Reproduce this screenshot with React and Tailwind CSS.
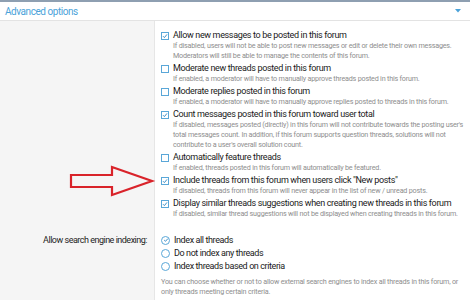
import React from "react";

const font = { fontFamily: 'Roboto, "Liberation Sans", Arial, sans-serif' };

function Check({ checked }) {
  return (
    <span className="mt-[2px] flex h-[8px] w-[8px] shrink-0 items-center justify-center border border-[#5aa7d8] bg-white">
      {checked && (
        <svg width="6" height="6" viewBox="0 0 6 6">
          <path d="M1 3.2 L2.4 4.6 L5 1.4" fill="none" stroke="#3d8fc8" strokeWidth="1" />
        </svg>
      )}
    </span>
  );
}

function Radio({ checked }) {
  return (
    <span className="flex h-[9px] w-[9px] shrink-0 items-center justify-center rounded-full border border-[#5aa7d8] bg-white">
      {checked && (
        <svg width="6" height="6" viewBox="0 0 6 6">
          <path d="M1.2 3.1 L2.5 4.3 L4.9 1.6" fill="none" stroke="#3d8fc8" strokeWidth="1" />
        </svg>
      )}
    </span>
  );
}

const items = [
  {
    checked: true,
    label: "Allow new messages to be posted in this forum",
    desc: [
      "If disabled, users will not be able to post new messages or edit or delete their own messages.",
      "Moderators will still be able to manage the contents of this forum.",
    ],
  },
  {
    checked: false,
    label: "Moderate new threads posted in this forum",
    desc: ["If enabled, a moderator will have to manually approve threads posted in this forum."],
  },
  {
    checked: false,
    label: "Moderate replies posted in this forum",
    desc: ["If enabled, a moderator will have to manually approve replies posted to threads in this forum."],
  },
  {
    checked: true,
    label: "Count messages posted in this forum toward user total",
    desc: [
      "If disabled, messages posted (directly) in this forum will not contribute towards the posting user's",
      "total messages count. In addition, if this forum supports question threads, solutions will not",
      "contribute to a user's overall solution count.",
    ],
  },
  {
    checked: false,
    label: "Automatically feature threads",
    desc: ["If enabled, threads posted in this forum will automatically be featured."],
  },
  {
    checked: true,
    label: 'Include threads from this forum when users click "New posts"',
    desc: ["If disabled, threads from this forum will never appear in the list of new / unread posts."],
  },
  {
    checked: true,
    label: "Display similar threads suggestions when creating new threads in this forum",
    desc: ["If disabled, similar thread suggestions will not be displayed when creating threads in this forum."],
  },
];

export default function App() {
  return (
    <div className="relative h-[300px] w-[470px] overflow-hidden bg-white" style={font}>
      <div className="h-[2px] bg-[#8e9fb1]" />
      <div className="flex h-[19px] items-center justify-between border-b border-[#e3e3e3] bg-white pl-[5px] pr-[9px]">
        <span className="text-[10px] tracking-[-0.45px] text-[#4aa2d9]">Advanced options</span>
        <svg width="6" height="4" viewBox="0 0 6 4">
          <path d="M0 0 L6 0 L3 3.5 Z" fill="#4aa2d9" />
        </svg>
      </div>
      <div className="flex h-[279px] flex-col">
        <div className="flex">
          <div className="w-[155px] shrink-0 border-r border-[#e6e6e6] bg-[#f5f5f5]" />
          <div className="flex-1 pb-[15px] pl-[6px] pt-[9px]">
            <div className="flex flex-col gap-[2px]">
              {items.map((it, i) => (
                <div key={i} className="flex gap-[4px]">
                  <Check checked={it.checked} />
                  <div>
                    <div className="whitespace-nowrap text-[9px] leading-[11px] tracking-[-0.35px] text-[#1a1a1a]">
                      {it.label}
                    </div>
                    {it.desc.map((d, j) => (
                      <div
                        key={j}
                        className="whitespace-nowrap text-[7.2px] leading-[10px] tracking-[-0.2px] text-[#8e8e8e]"
                      >
                        {d}
                      </div>
                    ))}
                  </div>
                </div>
              ))}
            </div>
          </div>
        </div>
        <div className="flex flex-1">
          <div className="w-[155px] shrink-0 border-r border-[#e6e6e6] bg-[#f5f5f5] pr-[7px] text-right text-[9px] leading-[12px] tracking-[-0.5px] text-[#1e1e1e]">
            Allow search engine indexing:
          </div>
          <div className="flex flex-1 flex-col gap-[1px] pl-[6px]">
            {[
              ["Index all threads", true],
              ["Do not index any threads", false],
              ["Index threads based on criteria", false],
            ].map(([t, c], i) => (
              <div key={i} className="flex h-[12px] items-center gap-[4px]">
                <Radio checked={c} />
                <span className="text-[9px] leading-[12px] tracking-[-0.4px] text-[#1a1a1a]">{t}</span>
              </div>
            ))}
            <div className="mt-[4px] whitespace-nowrap text-[7.2px] leading-[10px] tracking-[-0.2px] text-[#8e8e8e]">
              <div>You can choose whether or not to allow external search engines to index all threads in this forum, or</div>
              <div>only threads meeting certain criteria.</div>
            </div>
          </div>
        </div>
      </div>
      <svg className="absolute left-[68px] top-[163px]" width="92" height="36" viewBox="0 0 92 36">
        <path
          d="M3 12 L44 12 L44 4 L84 18 L44 32 L44 24 L3 24 Z"
          fill="none"
          stroke="#d9232a"
          strokeWidth="2.2"
          strokeLinejoin="miter"
        />
      </svg>
    </div>
  );
}
